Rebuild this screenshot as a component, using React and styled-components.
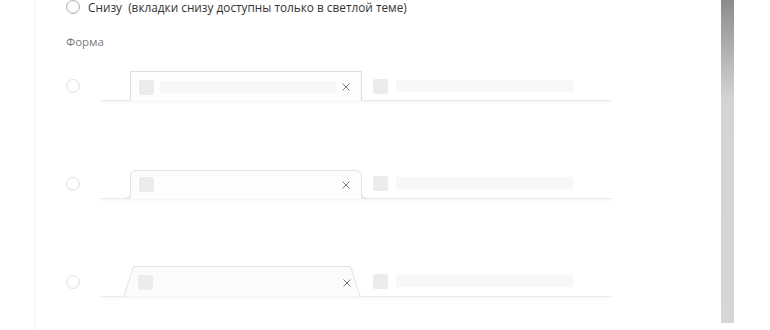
import React from "react";
import styled, { createGlobalStyle, css } from "styled-components";

const GlobalStyle = createGlobalStyle`
  html, body {
    margin: 0;
    padding: 0;
    background: #ffffff;
    overflow: hidden;
  }
  body {
    font-family: "Open Sans", "Noto Sans", sans-serif;
  }
`;

const Page = styled.div`
  display: flex;
  width: 770px;
  height: 330px;
  overflow: hidden;
  background: #fff;
`;

const Panel = styled.div`
  width: 686px;
  margin-left: 34px;
  height: 330px;
  overflow: hidden;
  border-left: 1px solid #f4f4f4;
  padding-left: 31px;
  box-sizing: border-box;
`;

const Scrollbar = styled.div`
  width: 13px;
  height: 323px;
  margin-left: 1px;
  background: linear-gradient(
    to bottom,
    #8c8c8c 0px,
    #a9a9a9 40px,
    #d4d4d4 100px,
    #d6d6d6 323px
  );
`;

const OptionRow = styled.div`
  display: flex;
  align-items: center;
  gap: 8px;
  height: 14px;
`;

const Radio = styled.span`
  display: inline-block;
  box-sizing: border-box;
  width: 14px;
  height: 14px;
  border-radius: 50%;
  flex: none;
  border: 1px solid ${({ $faint }) => ($faint ? "#e2e2e2" : "#b3b3b3")};
  background: ${({ $faint }) =>
    $faint
      ? "radial-gradient(circle at 50% 40%, #ffffff 40%, #f6f6f6 100%)"
      : "radial-gradient(circle at 50% 40%, #ffffff 35%, #ececec 100%)"};
`;

const OptionLabel = styled.span`
  font-size: 11.8px;
  font-weight: 500;
  color: #333333;
  white-space: pre;
  line-height: 14px;
`;

const SectionTitle = styled.div`
  font-size: 11.5px;
  color: #7a7a7a;
  margin-top: 21px;
  line-height: 14px;
`;

const ShapeRow = styled.div`
  display: flex;
  align-items: flex-start;
  height: 98px;
  margin-top: ${({ $first }) => ($first ? "21px" : "0")};
`;

const RadioSlot = styled.div`
  width: 34px;
  padding-top: ${({ $top }) => $top}px;
`;

const Strip = styled.div`
  position: relative;
  width: 512px;
  height: 31px;
  display: flex;
  align-items: flex-end;
  padding-left: 30px;
  box-sizing: border-box;
  border-bottom: 1px solid #ebebeb;
  box-shadow: 0 3px 3px -2px rgba(0, 0, 0, 0.05);
`;

const ActiveTab = styled.div`
  position: relative;
  width: 232px;
  height: 30px;
  margin-bottom: -1px;
  display: flex;
  align-items: center;
  padding: 0 8px;
  gap: 6px;
  box-sizing: border-box;
  background: #fdfdfd;

  ${({ $shape }) =>
    $shape === "rect" &&
    css`
      border: 1px solid #dedede;
      border-bottom: 1px solid #fdfdfd;
      padding-top: 2px;
    `}

  ${({ $shape }) =>
    $shape === "round" &&
    css`
      height: 29px;
      border: 1px solid #e4e4e4;
      border-bottom: 1px solid #fdfdfd;
      border-radius: 6px 6px 0 0;

      &::before,
      &::after {
        content: "";
        position: absolute;
        bottom: -1px;
        width: 6px;
        height: 6px;
        border-bottom: 1px solid #e4e4e4;
      }
      &::before {
        left: -7px;
        border-right: 1px solid #e4e4e4;
        border-bottom-right-radius: 6px;
      }
      &::after {
        right: -7px;
        border-left: 1px solid #e4e4e4;
        border-bottom-left-radius: 6px;
      }
    `}

  ${({ $shape }) =>
    $shape === "slant" &&
    css`
      background: transparent;
      padding-top: 2px;
      height: 31px;
    `}
`;

const SlantShape = styled.svg`
  position: absolute;
  left: -6px;
  top: 0;
  overflow: visible;
`;

const Favicon = styled.span`
  position: relative;
  width: 15px;
  height: 15px;
  flex: none;
  border-radius: 2px;
  background: #ececec;
`;

const TitleBar = styled.span`
  position: relative;
  flex: 1;
  height: 12px;
  background: ${({ $hidden }) => ($hidden ? "transparent" : "#f7f7f7")};
`;

const Close = styled.span`
  position: relative;
  width: 8px;
  height: 8px;
  flex: none;
  margin-right: 3px;
  display: flex;
`;

const InactiveTab = styled.div`
  display: flex;
  align-items: center;
  gap: 8px;
  height: 30px;
  padding-left: 11px;
  padding-top: ${({ $pt }) => $pt || 0}px;
  box-sizing: border-box;
  width: 211px;
`;

const CloseIcon = () => (
  <Close>
    <svg width="8" height="8" viewBox="0 0 8 8">
      <path d="M0.5 0.5 L7.5 7.5 M7.5 0.5 L0.5 7.5" stroke="#7a7a7a" strokeWidth="1" />
    </svg>
  </Close>
);

const TabPreview = ({ shape }) => (
  <Strip>
    <ActiveTab $shape={shape}>
      {shape === "slant" && (
        <SlantShape width="246" height="31" viewBox="0 0 246 31">
          <path
            d="M0 30.5 L9 1.5 Q10 0.5 12 0.5 L224 0.5 Q226 0.5 227 1.5 L236 30.5"
            fill="#fcfcfc"
            stroke="#e2e2e2"
            strokeWidth="1"
          />
        </SlantShape>
      )}
      <Favicon />
      <TitleBar $hidden={shape !== "rect"} />
      <CloseIcon />
    </ActiveTab>
    <InactiveTab $pt={shape === "rect" ? 2 : 0}>
      <Favicon />
      <TitleBar />
    </InactiveTab>
  </Strip>
);

const shapes = [
  { id: "rect", radioTop: 6 },
  { id: "round", radioTop: 6 },
  { id: "slant", radioTop: 6 },
];

export default function App() {
  return (
    <>
      <GlobalStyle />
      <Page>
        <Panel>
          <OptionRow>
            <Radio />
            <OptionLabel>
              Снизу  (вкладки снизу доступны только в светлой теме)
            </OptionLabel>
          </OptionRow>
          <SectionTitle>Форма</SectionTitle>
          {shapes.map((s, i) => (
            <ShapeRow key={s.id} $first={i === 0}>
              <RadioSlot $top={s.radioTop}>
                <Radio $faint />
              </RadioSlot>
              <TabPreview shape={s.id} />
            </ShapeRow>
          ))}
        </Panel>
        <Scrollbar />
      </Page>
    </>
  );
}
